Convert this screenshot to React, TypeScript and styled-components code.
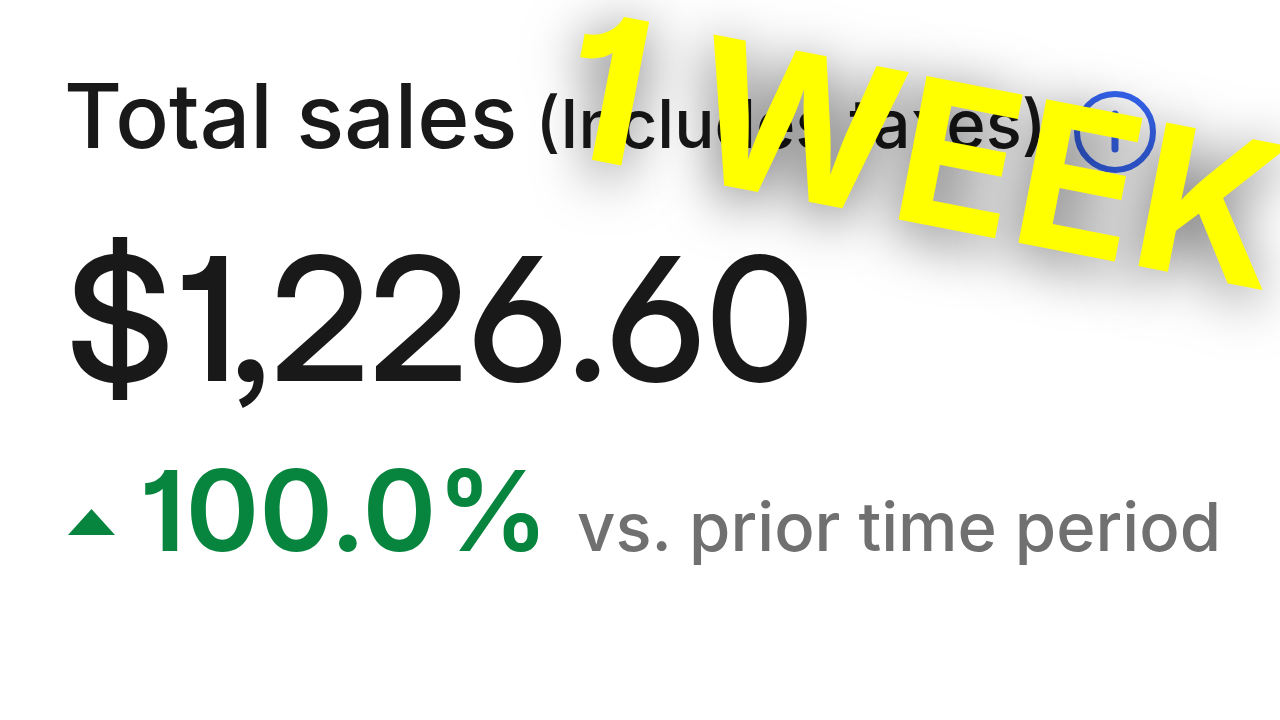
import React from "react";
import styled, { createGlobalStyle } from "styled-components";

const GlobalStyle = createGlobalStyle`
  * { box-sizing: border-box; }
  body {
    margin: 0;
    background: #fff;
    color: #191919;
    font-family: Inter, "Liberation Sans", sans-serif;
  }
`;

const Page = styled.main`
  position: relative;
  min-height: 100vh;
  padding: 66px 40px 66px 64px;
  overflow: hidden;
`;

const Header = styled.header`
  display: flex;
  align-items: baseline;
  height: 100px;
  white-space: nowrap;
`;

const Title = styled.h1`
  margin: 0;
  font-size: 89px;
  line-height: 100px;
  font-weight: 500;
`;

const Note = styled.span`
  margin-left: 18px;
  font-size: 67px;
  line-height: 80px;
  font-weight: 500;
`;

const InfoButton = styled.button`
  align-self: center;
  flex-shrink: 0;
  display: flex;
  margin: 32px 0 0 28px;
  padding: 0;
  border: 0;
  background: none;
  color: #3665f3;
`;

const Amount = styled.p`
  margin: 52px 0 0 2px;
  font-family: "Inter Display", Inter, "Liberation Sans", sans-serif;
  font-feature-settings: "ss01", "ss03", "cv01";
  font-size: 172px;
  line-height: 200px;
  font-weight: 500;
`;

const Trend = styled.div`
  display: flex;
  align-items: baseline;
  margin-top: 22px;
  white-space: nowrap;
`;

const Percent = styled.strong`
  margin-left: 24px;
  font-feature-settings: "cv01";
  font-size: 112px;
  line-height: 140px;
  font-weight: 600;
  color: #07853f;
`;

const Arrow = styled.svg`
  align-self: center;
  flex-shrink: 0;
  margin: 24px 0 0 4px;
`;

const Period = styled.span`
  margin-left: 28px;
  font-size: 67px;
  line-height: 80px;
  font-weight: 500;
  color: #707070;
`;

const Banner = styled.div`
  position: absolute;
  top: -18px;
  left: 584px;
  transform: rotate(11deg);
  transform-origin: 0 0;
  font-feature-settings: "cv01";
  font-size: 201px;
  line-height: 200px;
  font-weight: 700;
  white-space: nowrap;
  color: #ff0;
  text-shadow: 0 10px 56px rgba(0, 0, 0, 0.6);
  pointer-events: none;
`;

export default function App() {
  return (
    <>
      <GlobalStyle />
      <Page>
        <Header>
          <Title>Total sales</Title>
          <Note>(Includes taxes)</Note>
          <InfoButton aria-label="About total sales">
            <svg width="82" height="82" viewBox="0 0 82 82" fill="none" stroke="currentColor">
              <circle cx="41" cy="41" r="38" strokeWidth="6" />
              <path d="M41 23v1M41 38v20" strokeWidth="7" strokeLinecap="round" />
            </svg>
          </InfoButton>
        </Header>
        <Amount>$1,226.60</Amount>
        <Trend>
          <Arrow width="47" height="26" viewBox="0 0 47 26" aria-hidden="true">
            <path d="M0 26 23.500 0 47 26z" fill="#07853f" />
          </Arrow>
          <Percent>100.0%</Percent>
          <Period>vs. prior time period</Period>
        </Trend>
        <Banner>1 WEEK</Banner>
      </Page>
    </>
  );
}
